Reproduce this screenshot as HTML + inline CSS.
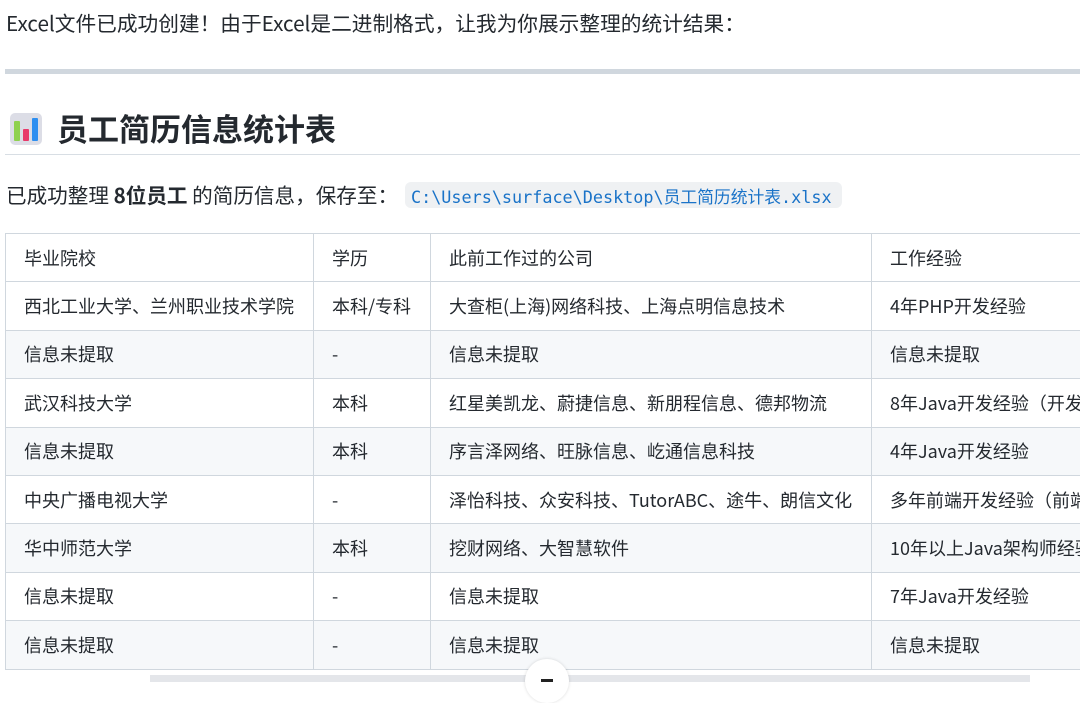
<!DOCTYPE html>
<html><head><meta charset="utf-8"><style>
body{margin:0;width:1080px;height:682px;overflow:hidden;background:#fff;font-family:"Noto Sans CJK SC","Liberation Sans",sans-serif;color:#24292f;font-size:16px;position:relative}
.a{position:absolute;white-space:nowrap}
table{position:absolute;left:5px;top:233px;border-collapse:collapse;width:1160px}
td{border:1px solid #d0d7de;height:48.4px;padding:0 0 0 18px;font-size:18px;box-sizing:border-box;line-height:22px}
tr:nth-child(odd) td{background:#f6f8fa}
tr:first-child td{background:#fff}
</style></head><body>
<div class="a" style="left:6px;top:8px;font-size:20.7px;line-height:28px">Excel文件已成功创建！由于Excel是二进制格式，让我为你展示整理的统计结果：</div>
<div class="a" style="left:5px;top:69px;width:1075px;height:5px;background:#d0d7de"></div>
<svg class="a" style="left:10px;top:113px" width="32" height="32" viewBox="0 0 32 32"><rect x="0" y="0" width="32" height="32" rx="5" fill="#dcdde6"/><rect x="4" y="8" width="6" height="20" rx="1" fill="#8fd14f"/><rect x="13" y="16" width="6" height="12" rx="1" fill="#e8396a"/><rect x="22" y="5" width="6" height="23" rx="1" fill="#2f8ff0"/></svg>
<div class="a" style="left:57px;top:107px;font-size:31px;font-weight:bold;line-height:42px">员工简历信息统计表</div>
<div class="a" style="left:5px;top:154px;width:1075px;height:1px;background:#d8dee4"></div>
<div class="a" style="left:6px;top:180px;font-size:20.6px;line-height:28px">已成功整理 <b>8位员工</b> 的简历信息，保存至：</div>
<div class="a" style="left:405px;top:182px;width:437px;height:26px;background:#eff1f3;border-radius:6px"></div>
<div class="a" style="left:411px;top:184px;font-family:'DejaVu Sans Mono','Noto Sans CJK SC',monospace;font-size:16.8px;color:#1a73c8">C:\Users\surface\Desktop\员工简历统计表.xlsx</div>
<table>
<colgroup><col style="width:308px"><col style="width:117px"><col style="width:441px"><col></colgroup>
<tr><td>毕业院校</td><td>学历</td><td>此前工作过的公司</td><td>工作经验</td></tr>
<tr><td>西北工业大学、兰州职业技术学院</td><td>本科/专科</td><td>大查柜(上海)网络科技、上海点明信息技术</td><td>4年PHP开发经验</td></tr>
<tr><td>信息未提取</td><td>-</td><td>信息未提取</td><td>信息未提取</td></tr>
<tr><td>武汉科技大学</td><td>本科</td><td>红星美凯龙、蔚捷信息、新朋程信息、德邦物流</td><td>8年Java开发经验（开发）</td></tr>
<tr><td>信息未提取</td><td>本科</td><td>序言泽网络、旺脉信息、屹通信息科技</td><td>4年Java开发经验</td></tr>
<tr><td>中央广播电视大学</td><td>-</td><td>泽怡科技、众安科技、TutorABC、途牛、朗信文化</td><td>多年前端开发经验（前端）</td></tr>
<tr><td>华中师范大学</td><td>本科</td><td>挖财网络、大智慧软件</td><td>10年以上Java架构师经验</td></tr>
<tr><td>信息未提取</td><td>-</td><td>信息未提取</td><td>7年Java开发经验</td></tr>
<tr><td>信息未提取</td><td>-</td><td>信息未提取</td><td>信息未提取</td></tr>
</table>
<div class="a" style="left:150px;top:675px;width:880px;height:7px;background:#e4e6ea"></div>
<div class="a" style="left:525px;top:659px;width:44px;height:44px;border-radius:50%;background:#fff;box-shadow:0 0 3px rgba(0,0,0,.15)"></div>
<div class="a" style="left:541px;top:679px;width:12px;height:3px;background:#222"></div>
</body></html>
